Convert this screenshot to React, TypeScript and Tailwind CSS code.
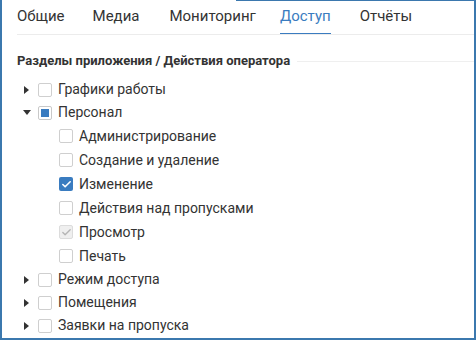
import { Check } from "lucide-react";

const TABS = [
  { label: "Общие", gap: "mr-[28px]" },
  { label: "Медиа", gap: "mr-[30px]" },
  { label: "Мониторинг", gap: "mr-[24px]" },
  { label: "Доступ", gap: "mr-[29px]" },
  { label: "Отчёты", gap: "" },
];

type Item = {
  label: string;
  state?: "none" | "checked" | "partial" | "disabled";
  caret?: "right" | "down";
  children?: Item[];
};

const TREE: Item[] = [
  { label: "Графики работы", caret: "right" },
  {
    label: "Персонал",
    caret: "down",
    state: "partial",
    children: [
      { label: "Администрирование" },
      { label: "Создание и удаление" },
      { label: "Изменение", state: "checked" },
      { label: "Действия над пропусками" },
      { label: "Просмотр", state: "disabled" },
      { label: "Печать" },
    ],
  },
  { label: "Режим доступа", caret: "right" },
  { label: "Помещения", caret: "right" },
  { label: "Заявки на пропуска", caret: "right" },
];

function Box({ state = "none" }: { state?: Item["state"] }) {
  if (state === "checked") {
    return (
      <span className="flex h-[14px] w-[14px] items-center justify-center rounded-[2px] bg-[#3a7cc0]">
        <Check size={11} strokeWidth={3.5} className="text-white" />
      </span>
    );
  }
  if (state === "disabled") {
    return (
      <span className="flex h-[14px] w-[14px] items-center justify-center rounded-[2px] border border-[#dcdcdc] bg-[#efefef]">
        <Check size={11} strokeWidth={3} className="text-[#b5b5b5]" />
      </span>
    );
  }
  if (state === "partial") {
    return (
      <span className="flex h-[14px] w-[14px] items-center justify-center rounded-[2px] border border-[#c9c9c9] bg-white">
        <span className="h-[8px] w-[8px] bg-[#3a7cc0]" />
      </span>
    );
  }
  return <span className="h-[14px] w-[14px] rounded-[2px] border border-[#cfcfcf] bg-white" />;
}

function Caret({ dir }: { dir?: "right" | "down" }) {
  return (
    <span className="flex w-[11px] items-center justify-center">
      {dir === "right" && (
        <svg width="5" height="8" viewBox="0 0 5 8">
          <path d="M0 0 L5 4 L0 8 Z" fill="#333" />
        </svg>
      )}
      {dir === "down" && (
        <svg width="8" height="5" viewBox="0 0 8 5">
          <path d="M0 0 L8 0 L4 5 Z" fill="#333" />
        </svg>
      )}
    </span>
  );
}

export default function App() {
  return (
    <div
      className="relative h-[340px] w-[476px] border-x-2 border-b-2 border-[#3b78ae] bg-white text-[#333]"
      style={{ fontFamily: "Roboto, 'Liberation Sans', sans-serif" }}
    >
      <div className="absolute top-0 left-[234px] right-0 h-px bg-[#3b78ae]" />

      {/* TABS */}
      <div className="ml-[15px] flex h-[35px] border-b border-[#ececec] pt-[6px]">
        {TABS.map((tab) => (
          <div key={tab.label} className={`flex flex-col ${tab.gap}`}>
            <span
              className={`text-[15px] leading-[20px] ${
                tab.label === "Доступ" ? "text-[#3a7cc0]" : "text-[#333]"
              }`}
            >
              {tab.label}
            </span>
            <span
              className={`mt-[7px] h-[3px] ${tab.label === "Доступ" ? "bg-[#3a7cc0]" : ""}`}
            />
          </div>
        ))}
      </div>

      {/* SECTION */}
      <div className="ml-[15px] mt-[18px] flex items-center gap-[7px]">
        <span className="text-[13px] font-bold leading-[16px] text-[#333]">
          Разделы приложения / Действия оператора
        </span>
        <span className="h-px flex-1 bg-[#efefef]" />
      </div>

      <div className="ml-[19px] mt-[9px]">
        {TREE.map((item) => (
          <div key={item.label}>
            <div className="flex h-[23px] items-center">
              <Caret dir={item.caret} />
              <span className="ml-[6px] flex">
                <Box state={item.state} />
              </span>
              <span className="ml-[6px] text-[14px] text-[#333]">{item.label}</span>
            </div>
            {item.children?.map((child) => (
              <div key={child.label} className="flex h-[24px] items-center pl-[38px]">
                <Box state={child.state} />
                <span className="ml-[6px] text-[14px] text-[#333]">{child.label}</span>
              </div>
            ))}
          </div>
        ))}
      </div>
    </div>
  );
}
